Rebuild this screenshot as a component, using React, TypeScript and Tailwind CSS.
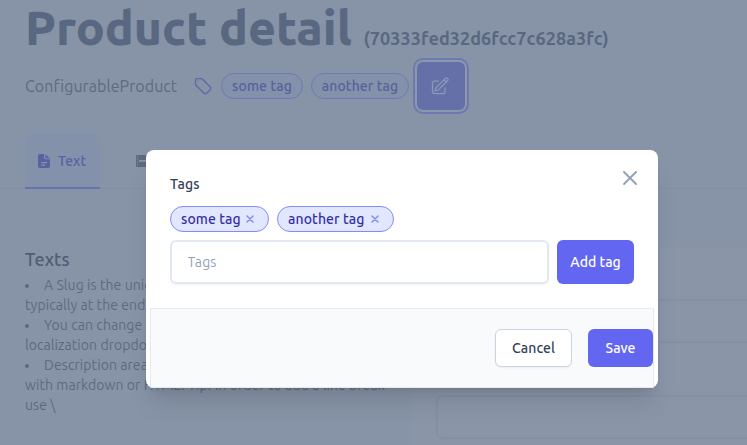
import React from "react";

function TagIcon() {
  return (
    <svg className="size-5 shrink-0 text-[#5f65aa]" viewBox="0 0 24 24" fill="none" stroke="currentColor" strokeWidth="1.5" strokeLinecap="round" strokeLinejoin="round">
      <path d="M9.568 3H5.25A2.25 2.25 0 0 0 3 5.25v4.318c0 .597.237 1.17.659 1.591l9.581 9.581c.699.699 1.78.872 2.607.33a18.095 18.095 0 0 0 5.223-5.223c.542-.827.369-1.908-.33-2.607L11.16 3.66A2.25 2.25 0 0 0 9.568 3Z" />
      <path d="M6 6h.008v.008H6V6Z" />
    </svg>
  );
}

function EditIcon() {
  return (
    <svg className="-ml-0.5 size-5 text-[#8c98ba]" viewBox="0 0 24 24" fill="none" stroke="currentColor" strokeWidth="1.5" strokeLinecap="round" strokeLinejoin="round">
      <path d="m16.862 4.487 1.687-1.688a1.875 1.875 0 1 1 2.652 2.652L10.582 16.07a4.5 4.5 0 0 1-1.897 1.13L6 18l.8-2.685a4.5 4.5 0 0 1 1.13-1.897l8.932-8.931Zm0 0L19.5 7.125M18 14v4.75A2.25 2.25 0 0 1 15.75 21H5.25A2.25 2.25 0 0 1 3 18.75V8.25A2.25 2.25 0 0 1 5.25 6H10" />
    </svg>
  );
}

function DocIcon() {
  return (
    <svg className="h-[14px] w-3 shrink-0" viewBox="0 0 12 14">
      <path fill="#5b62a0" fillRule="evenodd" d="M2 0h4v3.5A1.7 1.7 0 0 0 7.7 5.2H12V12a2 2 0 0 1-2 2H2a2 2 0 0 1-2-2V2a2 2 0 0 1 2-2Zm1 8v1.2h6V8H3Zm0 2.6v1.2h4v-1.2H3Z" />
      <path fill="#5b62a0" d="M7.2.2 11.6 4.2H8.2a1 1 0 0 1-1-1V.2Z" />
    </svg>
  );
}

function FilmIcon() {
  return (
    <svg className="h-3 w-4 shrink-0" viewBox="0 0 16 12">
      <path fill="#5c6980" fillRule="evenodd" d="M1 0h14a1 1 0 0 1 1 1v10a1 1 0 0 1-1 1H1a1 1 0 0 1-1-1V1a1 1 0 0 1 1-1Zm0 1.6v1h1v-1H1Zm0 2.6v1h1v-1H1Zm0 2.6v1h1v-1H1Zm0 2.6v1h1v-1H1ZM3 5v1.7h10V5H3Z" />
    </svg>
  );
}

function Backdrop() {
  return (
    <div className="flex h-full flex-col">
      <header className="h-[134px] pl-[25px]">
        <div className="flex h-[62px] items-baseline whitespace-nowrap font-bold text-[#596880]">
          <h1 className="w-[338.5px] pt-[3px] text-[48px] font-extrabold leading-[48px]">Product detail</h1>
          <span className="text-lg leading-6 tracking-[0.09px]">(70333fed32d6fcc7c628a3fc)</span>
        </div>
        <div className="flex h-12 items-center whitespace-nowrap">
          <span className="w-[168px] text-base tracking-[0.06px] text-[#5d6b81]">ConfigurableProduct</span>
          <TagIcon />
          <span className="ml-2 flex h-[26px] w-[82px] items-center justify-center rounded-full border border-[#6e7ab3] bg-[#8391ab] text-sm font-medium tracking-[0.1px] text-[#5a609c]">some tag</span>
          <span className="ml-2 flex h-[26px] w-[98px] items-center justify-center rounded-full border border-[#6e7ab3] bg-[#8391ab] text-sm font-medium tracking-[0.1px] text-[#5a609c]">another tag</span>
          <button className="ml-2 flex size-12 items-center justify-center rounded-md bg-[#6570a8] ring-2 ring-[#6d79b0] ring-offset-2 ring-offset-[#8b97ab]">
            <EditIcon />
          </button>
        </div>
      </header>
      <nav className="flex h-[55px] shrink-0 items-end border-b border-[#828fa5]">
        <div className="ml-[25px] -mb-px flex h-[55px] w-[75px] items-center gap-2 rounded-t-lg border-b-2 border-[#6671ad] bg-[#8391ab] pl-[13px] text-sm font-medium text-[#5b62a0]">
          <DocIcon />
          Text
        </div>
        <div className="ml-9 flex h-[55px] items-center gap-2 text-sm text-[#5c6980]">
          <FilmIcon />
        </div>
      </nav>
      <main className="flex min-h-0 flex-1">
        <section className="w-[412px] shrink-0 pl-[25px] pt-[58px]">
          <h3 className="text-lg font-medium leading-6 tracking-[0.1px] text-[#4f5d75]">Texts</h3>
          <ul className="mt-1 whitespace-nowrap text-sm tracking-[0.07px] text-[#5d6b81]">
            <li className="flex h-5 items-center"><span className="mr-[15px] mt-0.5 size-1 rounded-full bg-current" />A Slug is the unique part of the URL,</li>
            <li className="h-5">typically at the end of the URL.</li>
            <li className="flex h-5 items-center"><span className="mr-[15px] mt-0.5 size-1 rounded-full bg-current" />You can change  the language in the</li>
            <li className="h-5">localization dropdown.</li>
            <li className="flex h-5 items-center"><span className="mr-[15px] mt-0.5 size-1 rounded-full bg-current" />Description area can be formatted</li>
            <li className="h-5">with markdown or HTML. Tip: In order to add a line break</li>
            <li className="h-5">use \</li>
          </ul>
        </section>
        <section className="mt-[58px] flex-1 overflow-hidden bg-[#8a95a8] pl-6 pt-[52px]">
          <div className="h-11 w-[400px] rounded-md border-2 border-[#8490a4]" />
          <div className="mt-[52px] h-11 w-[400px] rounded-md border-2 border-[#8490a4]" />
        </section>
      </main>
    </div>
  );
}

function Pill({ children, className }: { children: string; className: string }) {
  return (
    <span className={`flex h-[26px] items-center justify-between whitespace-nowrap rounded-full border border-[#818cf8] bg-[#e0e7ff] pl-[10px] text-sm font-medium tracking-[0.1px] text-[#3730a3] ${className}`}>
      {children}
      <svg className="size-2 shrink-0 text-[#818cf8]" viewBox="0 0 8 8" fill="none" stroke="currentColor" strokeWidth="1.5" strokeLinecap="round">
        <path d="m1 1 6 6m0-6L1 7" />
      </svg>
    </span>
  );
}

function Dialog() {
  return (
    <div className="absolute left-[146px] top-[150px] flex h-[238px] w-[512px] flex-col overflow-hidden rounded-lg bg-white text-sm shadow-xl">
      <div className="flex h-[158px] shrink-0 flex-col px-6">
        <div className="flex h-14 items-start justify-between">
          <h2 className="pt-6 font-medium leading-5 tracking-[0.1px] text-[#334155]">Tags</h2>
          <svg className="mr-[-8px] mt-4 size-6 text-[#94a3b8]" viewBox="0 0 24 24" fill="none" stroke="currentColor" strokeWidth="2" strokeLinecap="round">
            <path d="M6 18 18 6M6 6l12 12" />
          </svg>
        </div>
        <div className="flex gap-2">
          <Pill className="w-[99px] pr-[14px]">some tag</Pill>
          <Pill className="w-[117px] pr-[14px]">another tag</Pill>
        </div>
        <div className="mt-2 flex gap-2">
          <input className="h-11 w-[379px] rounded-md border-2 border-[#e2e8f0] pl-[15.5px] tracking-[0.1px] shadow-xs outline-none placeholder:text-[#94a3b8]" placeholder="Tags" />
          <button className="h-11 w-[77px] whitespace-nowrap rounded-md bg-[#6366f1] font-medium text-white">Add tag</button>
        </div>
      </div>
      <div className="mx-1 flex h-20 items-center justify-end border border-[#e2e8f0] border-t-[#e8eef9] bg-[#f8fafc]">
        <button className="h-[38px] w-[77px] rounded-md border border-[#cbd5e1] bg-white font-medium tracking-[0.1px] text-[#334155] shadow-xs">Cancel</button>
        <button className="ml-4 h-[38px] w-[65px] rounded-md bg-[#6366f1] font-medium text-white">Save</button>
      </div>
    </div>
  );
}

export default function App() {
  return (
    <div className="relative h-[445px] w-[747px] overflow-hidden bg-[#8794a7] font-[Ubuntu,'Noto_Sans',sans-serif]">
      <Backdrop />
      <Dialog />
    </div>
  );
}
